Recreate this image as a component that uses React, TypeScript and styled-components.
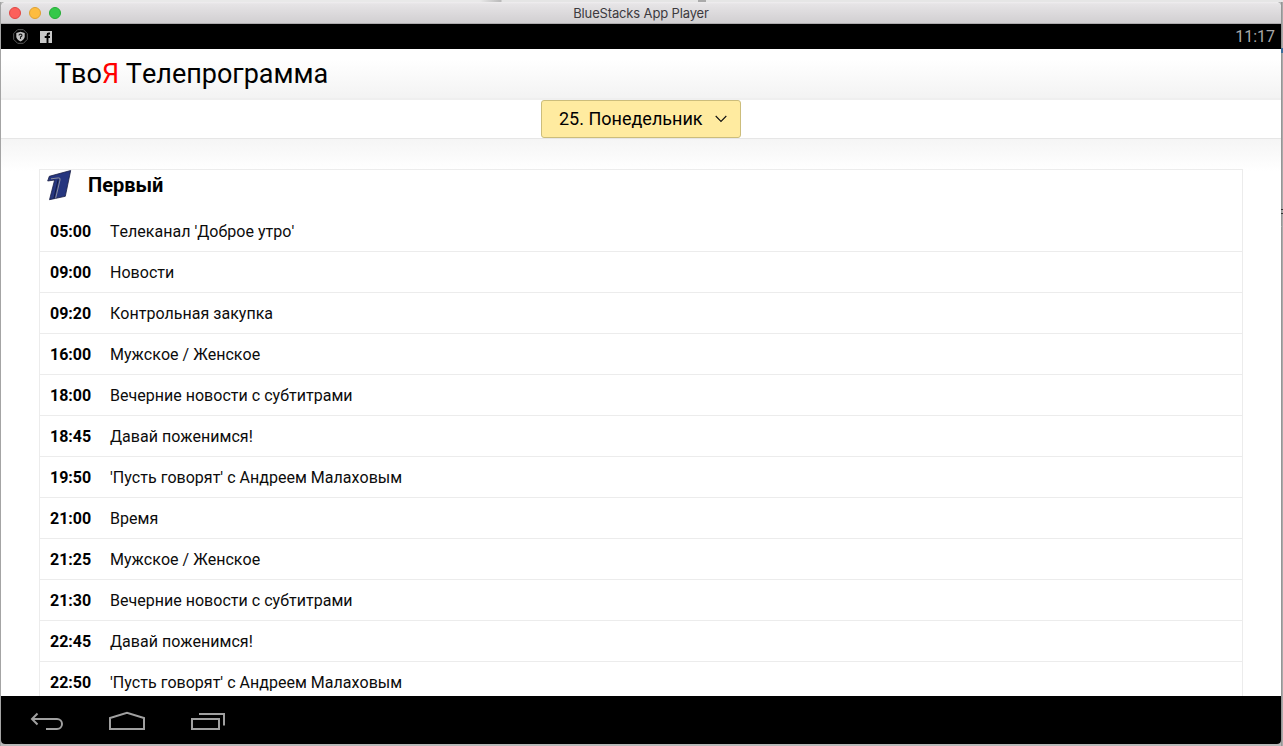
import React from 'react';
import styled, { createGlobalStyle } from 'styled-components';

const GlobalStyle = createGlobalStyle`
  * { box-sizing: border-box; }
  html, body { margin: 0; overflow: hidden; }
  body { font-family: Roboto, "Liberation Sans", sans-serif; font-kerning: none; color: #000; }
`;

const Desktop = styled.div`
  width: 1283px;
  height: 746px;
  padding: 2px 2px 2px 1px;
  background:
    linear-gradient(#aaa, #aaa) 1281px 226px / 2px 1px no-repeat,
    linear-gradient(#333, #333) 1281px 209px / 2px 1px no-repeat,
    linear-gradient(#333, #333) 1281px 213px / 2px 1px no-repeat,
    linear-gradient(#3b6d9c, #3b6d9c) 1281px 48px / 2px 5px no-repeat,
    linear-gradient(to right, #e9e9e9 480px, #b9b9b9 501px, #e5e5e5 502px, #e5e5e5 698px, #aaa 698px, #aaa 706px, #e6e6e6 706px) 0 0 / 1283px 2px no-repeat,
    linear-gradient(to right, #a4a4a4 1px, #b9b9b9 1px, #b9b9b9 1281px, #8b8b8b 1281px, #b4b4b4 1283px);
`;

const AppWindow = styled.div`
  width: 1280px;
  height: 742px;
  display: flex;
  flex-direction: column;
  border-radius: 5px 5px 4px 4px;
  overflow: hidden;
  background: #fff;
`;

const TitleBar = styled.div`
  flex: none;
  height: 22px;
  display: grid;
  grid-template-columns: 1fr auto 1fr;
  align-items: center;
  padding: 1px 8px 0;
  background: linear-gradient(#f0eef0 0, #e6e4e6 2px, #d1cfd1);
  border-bottom: 1px solid #aeacae;
`;

const Lights = styled.div`
  display: flex;
  gap: 8px;
`;

const Light = styled.i<{ $fill: string; $edge: string }>`
  width: 12px;
  height: 12px;
  border-radius: 50%;
  background: ${p => p.$fill};
  border: 1px solid ${p => p.$edge};
`;

const WindowTitle = styled.span`
  font: 13px/18px Inter, sans-serif;
  letter-spacing: -0.15px;
  color: #3c3a3e;
`;

const StatusBar = styled.div`
  flex: none;
  height: 25px;
  display: flex;
  align-items: center;
  gap: 12px;
  padding: 0 6px 0 12px;
  background: #000;
  svg { display: block; }
`;

const Clock = styled.time`
  margin-left: auto;
  font-size: 16px;
  color: #a9a9a9;
`;

const Header = styled.header`
  flex: none;
  height: 51px;
  padding-left: 54px;
  background: linear-gradient(#fff 20%, #f3f3f3);
  border-bottom: 2px solid #efefef;
`;

const Brand = styled.h1`
  margin: 0;
  font-size: 27px;
  line-height: 51px;
  font-weight: 400;
  white-space: nowrap;
  em { font-style: normal; color: #f00; }
`;

const DayBar = styled.div`
  flex: none;
  height: 39px;
  display: flex;
  justify-content: center;
  align-items: flex-start;
  border-bottom: 1px solid #e6e6e6;
`;

const DayButton = styled.button`
  width: 200px;
  height: 38px;
  display: flex;
  align-items: center;
  justify-content: space-between;
  padding: 0 13px 0 17px;
  font: 18px/36px Roboto, sans-serif;
  font-kerning: none;
  color: #000;
  white-space: nowrap;
  background: #ffeba0;
  border: 1px solid #ccbd7b;
  border-radius: 3px;
`;

const Content = styled.main`
  flex: 1;
  min-height: 0;
  overflow: hidden;
  padding: 30px 38px 0;
  background: linear-gradient(#f5f5f5, #fff 32px);
`;

const Channel = styled.section`
  width: 1204px;
  border: 1px solid #ececec;
  background: #fff;
`;

const ChannelHead = styled.div`
  height: 41px;
  display: flex;
  align-items: flex-start;
  gap: 16px;
  padding-left: 7px;
`;

const ChannelName = styled.h2`
  margin: 0;
  font-size: 20px;
  line-height: 30px;
  font-weight: 700;
`;

const Row = styled.div`
  height: 41px;
  display: grid;
  grid-template-columns: 60px 1fr;
  padding-left: 10px;
  font-size: 16px;
  line-height: 42px;
  border-bottom: 1px solid #ececec;
  b { font-weight: 700; }
  span { letter-spacing: 0.02px; color: #0c0c0c; }
`;

const NavBar = styled.nav`
  flex: none;
  height: 48px;
  display: flex;
  align-items: center;
  padding: 4px 0 0 28px;
  gap: 43px;
  background: #000;
  svg { display: block; }
`;

const programme: [string, string][] = [
  ['05:00', "Телеканал 'Доброе утро'"],
  ['09:00', 'Новости'],
  ['09:20', 'Контрольная закупка'],
  ['16:00', 'Мужское / Женское'],
  ['18:00', 'Вечерние новости с субтитрами'],
  ['18:45', 'Давай поженимся!'],
  ['19:50', "'Пусть говорят' с Андреем Малаховым"],
  ['21:00', 'Время'],
  ['21:25', 'Мужское / Женское'],
  ['21:30', 'Вечерние новости с субтитрами'],
  ['22:45', 'Давай поженимся!'],
  ['22:50', "'Пусть говорят' с Андреем Малаховым"],
];

const ShieldIcon = () => (
  <svg width="15" height="15" viewBox="0 0 15 15">
    <path d="M4.600.7h5.800l3.900 3.900v5.800l-3.900 3.900H4.600L.7 10.400V4.600z" fill="none" stroke="#5c5c5c" />
    <path d="M7.500 2.800 11.700 4v3.500c0 2.200-1.700 3.800-4.200 5C5 11.300 3.300 9.700 3.300 7.500V4z" fill="#c2c2c2" />
    <path d="M7.500 10V7.700c1.900 0 1.900-2.600 0-2.600-1 0-1.500.6-1.500 1.300" fill="none" stroke="#222" strokeWidth="1.100" />
  </svg>
);

const FacebookIcon = () => (
  <svg width="12" height="12" viewBox="0 0 12 12">
    <path d="M0 0h12v12H0z" fill="#c8c8c8" />
    <path d="M10 2.500H8.900Q7.500 2.500 7.500 4v8M4.700 6H10" fill="none" stroke="#000" strokeWidth="1.900" />
  </svg>
);

const ChannelLogo = () => (
  <svg width="25" height="31" viewBox="0 0 25 31">
    <path d="M2.300 6.300 23.700.5 18.300 26.300 2.500 29.700 7.600 10 .7 11z" fill="#26367f" stroke="#1a2045" strokeWidth=".8" />
    <path d="M4 8.800 11.500 7.900Q13.600 7.700 13 10L8.600 28.400" fill="none" stroke="#b9b6ad" strokeWidth=".7" />
    <path d="M11.200 9.500 6.900 28.500" fill="none" stroke="#101638" strokeWidth=".9" />
  </svg>
);

export default function App() {
  return (
    <Desktop>
      <GlobalStyle />
      <AppWindow>
        <TitleBar>
          <Lights>
            <Light $fill="#fc605b" $edge="#df4744" />
            <Light $fill="#fdbc40" $edge="#dea032" />
            <Light $fill="#34c84a" $edge="#25ac36" />
          </Lights>
          <WindowTitle>BlueStacks App Player</WindowTitle>
        </TitleBar>
        <StatusBar>
          <ShieldIcon />
          <FacebookIcon />
          <Clock>11:17</Clock>
        </StatusBar>
        <Header>
          <Brand>Тво<em>Я</em> Телепрограмма</Brand>
        </Header>
        <DayBar>
          <DayButton>
            25. Понедельник
            <svg width="12" height="8" viewBox="0 0 12 8">
              <path d="M.7 1 6 6.500 11.300 1" fill="none" stroke="#111" strokeWidth="1.100" />
            </svg>
          </DayButton>
        </DayBar>
        <Content>
          <Channel>
            <ChannelHead>
              <ChannelLogo />
              <ChannelName>Первый</ChannelName>
            </ChannelHead>
            {programme.map(([time, title]) => (
              <Row key={time}>
                <b>{time}</b>
                <span>{title}</span>
              </Row>
            ))}
          </Channel>
        </Content>
        <NavBar>
          <svg width="36" height="22" viewBox="0 0 36 22">
            <path d="M3 8h25a5 5 0 0 1 0 10H17M8.500 2.500 3 8l5.500 5.500" fill="none" stroke="#a0a0a0" strokeWidth="2" />
          </svg>
          <svg width="38" height="22" viewBox="0 0 38 22">
            <path d="M2 18V7L19 1.700l17 5.300V18z" fill="none" stroke="#a0a0a0" strokeWidth="2" />
          </svg>
          <svg width="36" height="22" viewBox="0 0 36 22">
            <path d="M3 8h27v10H3zM10 3h25v11.500" fill="none" stroke="#a0a0a0" strokeWidth="2" />
          </svg>
        </NavBar>
      </AppWindow>
    </Desktop>
  );
}
